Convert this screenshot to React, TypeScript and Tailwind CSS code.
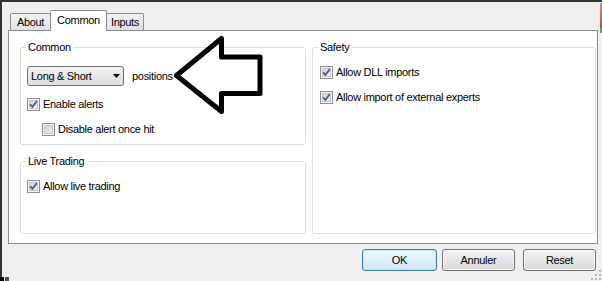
import type { ReactNode } from "react";

const FONT =
  "font-['Liberation_Sans',Arial,sans-serif] text-[11px] tracking-[-0.3px] leading-[13px] text-black";

function CheckBox({ id, checked }: { id: string; checked?: boolean }) {
  return (
    <svg width="13" height="13" viewBox="0 0 13 13" className="shrink-0">
      <defs>
        <linearGradient id={id} x1="0" y1="0" x2="1" y2="1">
          <stop offset="0" stopColor="#cfd2d7" />
          <stop offset="1" stopColor="#f4f4f4" />
        </linearGradient>
      </defs>
      <rect x="0.5" y="0.5" width="12" height="12" fill="#f7f7f7" stroke="#8e8f8f" />
      <rect x="2.5" y="2.5" width="8" height="8" fill={`url(#${id})`} stroke="#c3c6cb" />
      {checked && (
        <path
          d="M3.2 6.3 L5.4 8.9 L9.9 3.1"
          fill="none"
          stroke="#4d5f91"
          strokeWidth="1.8"
        />
      )}
    </svg>
  );
}

function CheckRow({
  id,
  label,
  checked,
  className = "",
}: {
  id: string;
  label: string;
  checked?: boolean;
  className?: string;
}) {
  return (
    <div className={`flex items-center gap-[3px] h-[13px] ${className}`}>
      <CheckBox id={id} checked={checked} />
      <span>{label}</span>
    </div>
  );
}

function Group({
  title,
  className = "",
  children,
}: {
  title: string;
  className?: string;
  children?: ReactNode;
}) {
  return (
    <div className={`relative border border-[#d5dfe5] rounded-[3px] ${className}`}>
      <span className="absolute top-[-7px] left-[5px] px-[2px] bg-white">{title}</span>
      {children}
    </div>
  );
}

function Tab({ label, active, className = "" }: { label: string; active?: boolean; className?: string }) {
  if (active) {
    return (
      <div
        className={`relative z-10 -mb-px h-[21px] bg-white border border-b-0 border-[#898c95] rounded-t-[2px] flex items-center justify-center pb-[2px] ${className}`}
      >
        {label}
      </div>
    );
  }
  return (
    <div
      className={`h-[17px] bg-gradient-to-b from-[#f3f3f3] to-[#e2e2e2] border border-b-0 border-[#898c95] rounded-t-[2px] flex items-center justify-center pt-px ${className}`}
    >
      {label}
    </div>
  );
}

function Button({ label, primary, className = "" }: { label: string; primary?: boolean; className?: string }) {
  return (
    <button
      className={`h-[22px] rounded-[3px] border flex items-center justify-center ${
        primary
          ? "border-[#3c7fb1] bg-gradient-to-b from-[#eef7fd] to-[#d3e8f7] shadow-[inset_0_0_0_1px_#c7e3f7]"
          : "border-[#707070] bg-gradient-to-b from-[#f4f4f4] to-[#d9d9d9] shadow-[inset_0_0_0_1px_#fafafa]"
      } ${className}`}
    >
      {label}
    </button>
  );
}

export default function App() {
  return (
    <div className={`relative w-[602px] h-[281px] overflow-hidden bg-[#f0f0f0] ${FONT}`}>
      <div className="h-[277px] border-l-2 border-t-2 border-[#333333]">
        {/* Tabs */}
        <div className="flex items-end h-[28px] pl-[8px]">
          <Tab label="About" className="w-[41px]" />
          <Tab label="Common" active className="w-[57px] -ml-px" />
          <Tab label="Inputs" className="w-[38px] -ml-px" />
        </div>

        {/* Tab page */}
        <div className="ml-[6px] w-[590px] h-[214px] border border-[#898c95] bg-white flex gap-[6px] pl-[11px] pt-[16px]">
          <div className="w-[286px] flex flex-col gap-[16px]">
            <Group title="Common" className="h-[98px]">
              <div className="flex flex-col pl-[6px] pt-[18px]">
                <div className="flex items-center">
                  <div className="w-[97px] h-[20px] border border-[#707070] rounded-[3px] bg-gradient-to-b from-[#f2f2f2] to-[#dedede] flex items-center justify-between pl-[3px] pr-[3px]">
                    <span>Long &amp; Short</span>
                    <svg width="7" height="4" viewBox="0 0 7 4">
                      <path d="M0 0 H7 L3.5 4 Z" fill="#000" />
                    </svg>
                  </div>
                  <span className="ml-[8px]">positions</span>
                </div>
                <CheckRow id="cb1" label="Enable alerts" checked className="mt-[12px]" />
                <CheckRow id="cb2" label="Disable alert once hit" className="mt-[12px] ml-[15px]" />
              </div>
            </Group>
            <Group title="Live Trading" className="h-[73px]">
              <div className="pl-[6px] pt-[18px]">
                <CheckRow id="cb3" label="Allow live trading" checked />
              </div>
            </Group>
          </div>
          <Group title="Safety" className="w-[284px] h-[187px]">
            <div className="flex flex-col gap-[12px] pl-[7px] pt-[18px]">
              <CheckRow id="cb4" label="Allow DLL imports" checked />
              <CheckRow id="cb5" label="Allow import of external experts" checked />
            </div>
          </Group>
        </div>

        {/* Buttons */}
        <div className="flex justify-end pr-[6px] pt-[5px]">
          <Button label="OK" primary className="w-[75px]" />
          <Button label="Annuler" className="w-[73px] ml-[5px]" />
          <Button label="Reset" className="w-[73px] ml-[8px]" />
        </div>
      </div>

      {/* bottom-left corner bits */}
      <div className="flex gap-[1px] h-[4px]">
        <span className="w-[4px] h-[4px] bg-black" />
        <span className="w-[4px] h-[4px] bg-[#4d4d4d]" />
      </div>

      {/* window edge on the right */}
      <div className="absolute right-0 top-[3px] w-[2px] h-[25px] bg-gradient-to-b from-[#e58a6f] to-[#c9452a]" />
      <div className="absolute right-0 top-[28px] w-[2px] h-[5px] bg-[#8a8a8a]" />

      {/* size grip */}
      <svg className="absolute right-[1px] bottom-[1px]" width="10" height="10" viewBox="0 0 10 10">
        <g fill="#b5b5b5">
          <rect x="8" y="0" width="2" height="2" />
          <rect x="8" y="4" width="2" height="2" />
          <rect x="4" y="4" width="2" height="2" />
          <rect x="8" y="8" width="2" height="2" />
          <rect x="4" y="8" width="2" height="2" />
          <rect x="0" y="8" width="2" height="2" />
        </g>
      </svg>

      {/* annotation arrow */}
      <svg
        className="absolute left-[168px] top-[32px] pointer-events-none"
        width="100"
        height="86"
        viewBox="168 32 100 86"
      >
        <path
          d="M176.5 75.5 L221.5 38.5 L221.5 57 L260 57 L260 93.5 L221.5 93.5 L221.5 111.5 Z"
          fill="#fff"
          stroke="#000"
          strokeWidth="5"
          strokeLinejoin="round"
        />
      </svg>
    </div>
  );
}
